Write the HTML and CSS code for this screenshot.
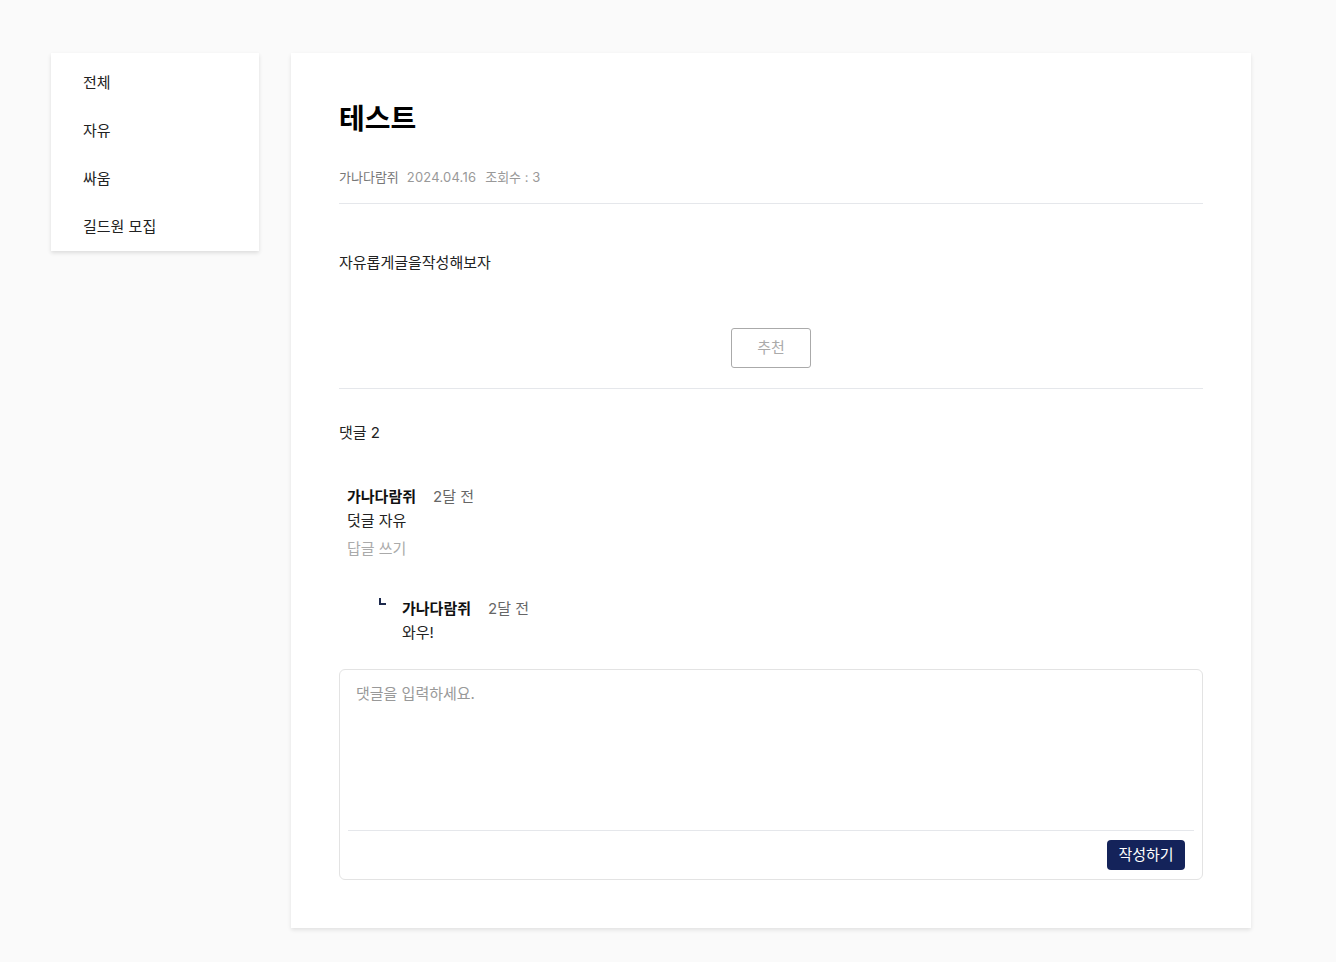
FILE: index.html
```html
<!DOCTYPE html>
<html lang="ko">
<head>
<meta charset="utf-8">
<title>테스트</title>
<link rel="stylesheet" href="styles.css">
</head>
<body>
<div class="page">
  <nav class="side">
    <a class="side-item">전체</a>
    <a class="side-item">자유</a>
    <a class="side-item">싸움</a>
    <a class="side-item">길드원 모집</a>
  </nav>
  <main class="card">
    <h1 class="title">테스트</h1>
    <div class="meta">
      <span class="author">가나다람쥐</span>
      <span class="date">2024.04.16</span>
      <span class="views">조회수 : 3</span>
    </div>
    <div class="body">자유롭게글을작성해보자</div>
    <div class="rec-wrap"><button class="rec">추천</button></div>
    <div class="comments">
      <div class="c-count">댓글 2</div>
      <div class="comment">
        <div class="c-head"><span class="c-name">가나다람쥐</span><span class="c-time">2달 전</span></div>
        <div class="c-text">덧글 자유</div>
        <div class="c-reply">답글 쓰기</div>
      </div>
      <div class="reply">
        <span class="corner"></span>
        <div class="reply-main">
          <div class="c-head"><span class="c-name">가나다람쥐</span><span class="c-time">2달 전</span></div>
          <div class="c-text">와우!</div>
        </div>
      </div>
      <div class="editor">
        <div class="placeholder">댓글을 입력하세요.</div>
        <div class="editor-foot"><button class="submit">작성하기</button></div>
      </div>
    </div>
  </main>
</div>
</body>
</html>
```
FILE: styles.css
```css
* { box-sizing: border-box; }
html, body { margin: 0; padding: 0; }
body {
  background: #fafafa;
  font-family: Inter, "Noto Sans CJK KR", sans-serif;
  color: #222;
}
.page {
  display: flex;
  align-items: flex-start;
  gap: 32px;
  padding: 53px 0 34px 51px;
}
.side {
  width: 208px;
  background: #fff;
  box-shadow: 0 2px 4px rgba(0,0,0,0.12);
  padding: 4px 0 2px;
  display: flex;
  flex-direction: column;
}
.side-item {
  height: 48px;
  display: flex;
  align-items: center;
  padding-left: 32px;
  font-size: 15px;
  color: #222;
}
.card {
  width: 960px;
  background: #fff;
  box-shadow: 0 2px 4px rgba(0,0,0,0.1);
  padding: 48px 48px 48px;
}
.title {
  margin: 0;
  font-size: 28px;
  font-weight: 700;
  line-height: 36px;
  color: #000;
}
.meta {
  margin-top: 30px;
  display: flex;
  gap: 8px;
  font-size: 13px;
  line-height: 20px;
  padding-bottom: 16px;
  border-bottom: 1px solid #e5e7eb;
}
.author { color: #777; }
.date, .views { color: #999; }
.date { letter-spacing: 0.2px; }
.views { margin-left: 1px; }
.body {
  margin-top: 48px;
  font-size: 15px;
  line-height: 22px;
  color: #222;
}
.rec-wrap {
  margin-top: 54px;
  display: flex;
  justify-content: center;
  padding-bottom: 20px;
  border-bottom: 1px solid #e5e7eb;
}
.rec {
  width: 80px;
  height: 40px;
  padding: 0 0 3px;
  background: #fff;
  border: 1px solid #aaa;
  border-radius: 3px;
  color: #aaa;
  font-family: inherit;
  font-size: 15px;
}
.c-count {
  margin-top: 33px;
  font-size: 15px;
  line-height: 22px;
}
.comment {
  margin-top: 41px;
  padding-left: 8px;
}
.c-head {
  display: flex;
  gap: 17px;
  font-size: 15px;
  line-height: 24px;
}
.c-name { font-weight: 700; color: #111; }
.c-time { color: #666; }
.c-text { font-size: 15px; line-height: 24px; color: #222; }
.c-reply { margin-top: 4px; font-size: 15px; line-height: 24px; color: #aaa; }
.reply {
  margin-top: 36px;
  display: flex;
  padding-left: 40px;
  gap: 16px;
}
.corner {
  width: 7px;
  height: 7px;
  margin-top: 1px;
  border-left: 2px solid #1d2a4d;
  border-bottom: 2px solid #1d2a4d;
}
.editor {
  margin-top: 24px;
  height: 211px;
  border: 1px solid #e3e3e3;
  border-radius: 6px;
  padding: 0 8px 9px;
  display: flex;
  flex-direction: column;
}
.placeholder {
  flex: 1;
  padding: 14px 8px;
  font-size: 15px;
  line-height: 20px;
  color: #999;
  border-bottom: 1px solid #e5e7eb;
}
.editor-foot {
  display: flex;
  justify-content: flex-end;
  padding: 9px 9px 0;
}
.submit {
  width: 78px;
  height: 30px;
  padding: 0 0 3px;
  background: #14235a;
  color: #fff;
  border: none;
  border-radius: 4px;
  font-family: inherit;
  font-size: 15px;
}
```
